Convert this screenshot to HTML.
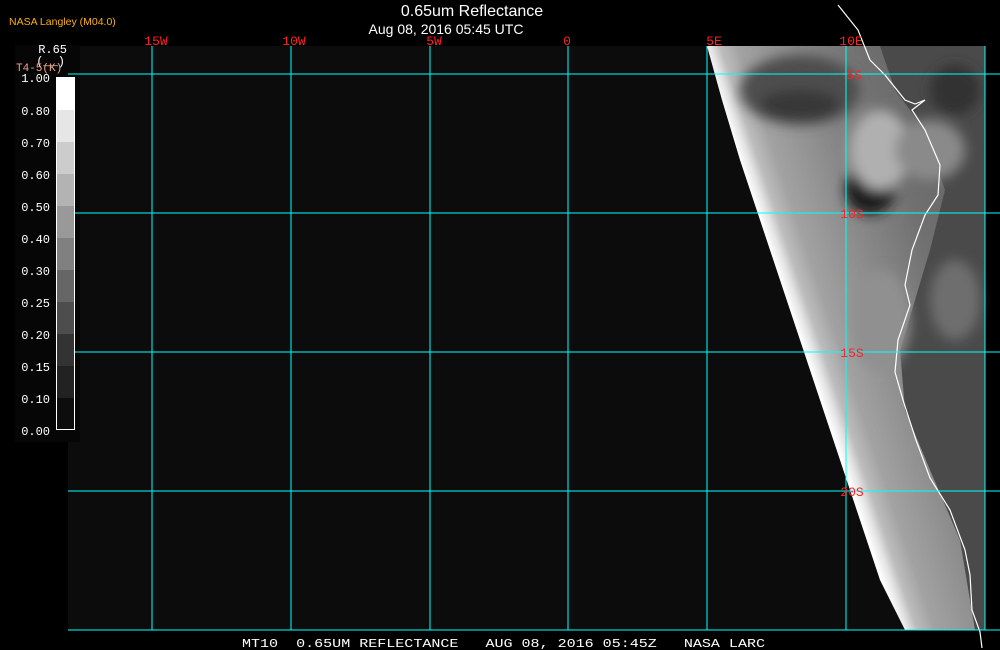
<!DOCTYPE html>
<html><head><meta charset="utf-8"><style>
html,body{margin:0;padding:0;background:#000;width:1000px;height:650px;overflow:hidden}
svg{display:block}
.m{font-family:"Liberation Mono",monospace}
</style></head><body>
<svg width="1000" height="650" viewBox="0 0 1000 650" xmlns="http://www.w3.org/2000/svg">
<defs>
<linearGradient id="sea" gradientUnits="userSpaceOnUse" x1="800" y1="338" x2="1037" y2="258">
<stop offset="0" stop-color="#ffffff"/>
<stop offset="0.035" stop-color="#e4e4e4"/>
<stop offset="0.07" stop-color="#bdbdbd"/>
<stop offset="0.14" stop-color="#a2a2a2"/>
<stop offset="0.35" stop-color="#8a8a8a"/>
<stop offset="0.6" stop-color="#707070"/>
<stop offset="1" stop-color="#5e5e5e"/>
</linearGradient>
<filter id="bl"><feGaussianBlur stdDeviation="6"/></filter>
</defs>
<rect x="68" y="46" width="917" height="584" fill="#0c0c0c"/>
<rect x="15" y="45" width="65" height="397" fill="#060606"/>
<polygon points="707,46 985,46 985,630 905,630 880,580 860,520 840,460 820,400 800,340 780,280 760,220 740,160 722,100" fill="url(#sea)"/>
<polygon points="880,46 985,46 985,630 975,630 960,540 930,470 905,410 900,350 915,300 930,250 945,190 925,130 895,90" fill="#4a4a4a"/>
<g filter="url(#bl)">
<ellipse cx="800" cy="90" rx="60" ry="35" fill="#4e4e4e"/>
<ellipse cx="800" cy="105" rx="40" ry="15" fill="#383838"/>
<ellipse cx="870" cy="190" rx="25" ry="25" fill="#1e1e1e"/>
<ellipse cx="880" cy="150" rx="30" ry="40" fill="#b0b0b0"/>
<ellipse cx="930" cy="150" rx="35" ry="30" fill="#8a8a8a"/>
<ellipse cx="955" cy="90" rx="25" ry="25" fill="#333"/>
<ellipse cx="955" cy="300" rx="25" ry="40" fill="#6e6e6e"/>
<ellipse cx="880" cy="320" rx="30" ry="50" fill="#909090"/>
</g>
<polyline points="838,5 858,30 870,60 885,75 905,100 915,104 925,100 912,110 925,130 940,165 938,195 925,215 912,250 905,285 910,305 898,340 895,372 903,400 916,440 930,478 950,510 965,550 970,575 972,610 980,632 982,648" fill="none" stroke="#fff" stroke-width="1.2"/>
<g stroke="#00ffff" stroke-width="1">
<line x1="152" y1="46" x2="152" y2="630"/>
<line x1="291" y1="46" x2="291" y2="630"/>
<line x1="430" y1="46" x2="430" y2="630"/>
<line x1="568" y1="46" x2="568" y2="630"/>
<line x1="707" y1="46" x2="707" y2="630"/>
<line x1="846" y1="46" x2="846" y2="630"/>
<line x1="985" y1="46" x2="985" y2="630"/>
<line x1="68" y1="74" x2="1000" y2="74"/>
<line x1="68" y1="213" x2="1000" y2="213"/>
<line x1="68" y1="352" x2="1000" y2="352"/>
<line x1="68" y1="491" x2="1000" y2="491"/>
<line x1="68" y1="630" x2="1000" y2="630"/>
</g>
<rect x="56" y="77" width="19" height="33" fill="#fff"/>
<rect x="56" y="110" width="19" height="32" fill="#e6e6e6"/>
<rect x="56" y="142" width="19" height="32" fill="#ccc"/>
<rect x="56" y="174" width="19" height="32" fill="#b3b3b3"/>
<rect x="56" y="206" width="19" height="32" fill="#999"/>
<rect x="56" y="238" width="19" height="32" fill="#808080"/>
<rect x="56" y="270" width="19" height="32" fill="#666"/>
<rect x="56" y="302" width="19" height="32" fill="#4d4d4d"/>
<rect x="56" y="334" width="19" height="32" fill="#333"/>
<rect x="56" y="366" width="19" height="32" fill="#222"/>
<rect x="56" y="398" width="19" height="32" fill="#0d0d0d"/>
<rect x="56.5" y="77.5" width="18" height="352" fill="none" stroke="#fff" stroke-width="1"/>
<g class="m" fill="#fff" font-size="12" text-anchor="end">
<text x="50" y="82">1.00</text>
<text x="50" y="115">0.80</text>
<text x="50" y="147">0.70</text>
<text x="50" y="179">0.60</text>
<text x="50" y="211">0.50</text>
<text x="50" y="243">0.40</text>
<text x="50" y="275">0.30</text>
<text x="50" y="307">0.25</text>
<text x="50" y="339">0.20</text>
<text x="50" y="371">0.15</text>
<text x="50" y="403">0.10</text>
<text x="50" y="435">0.00</text>
<text x="67" y="53">R.65</text>
<text x="65" y="65">(__)</text>
</g>
<text class="m" x="16" y="71" font-size="11" fill="#f0a080">T4-5(K)</text>
<text x="9" y="25" font-family="Liberation Sans,sans-serif" font-size="10.5" fill="#ffb000">NASA Langley (M04.0)</text>
<text x="472" y="16" text-anchor="middle" font-family="Liberation Sans,sans-serif" font-size="16" fill="#fff">0.65um Reflectance</text>
<text x="446" y="34" text-anchor="middle" font-family="Liberation Sans,sans-serif" font-size="14" fill="#fff">Aug 08, 2016 05:45 UTC</text>
<g class="m" fill="#ff2020" font-size="13" text-anchor="middle">
<text x="156" y="45">15W</text>
<text x="294" y="45">10W</text>
<text x="434" y="45">5W</text>
<text x="567" y="45">0</text>
<text x="714" y="45">5E</text>
<text x="851" y="45">10E</text>
</g>
<g class="m" fill="#ff2020" font-size="13" text-anchor="middle">
<text x="854" y="79">5S</text>
<text x="852" y="218">10S</text>
<text x="852" y="357">15S</text>
<text x="852" y="496">20S</text>
</g>
<text class="m" x="242" y="647" textLength="523" lengthAdjust="spacingAndGlyphs" font-size="12" fill="#fff" xml:space="preserve">MT10  0.65UM REFLECTANCE   AUG 08, 2016 05:45Z   NASA LARC</text>
</svg>
</body></html>
